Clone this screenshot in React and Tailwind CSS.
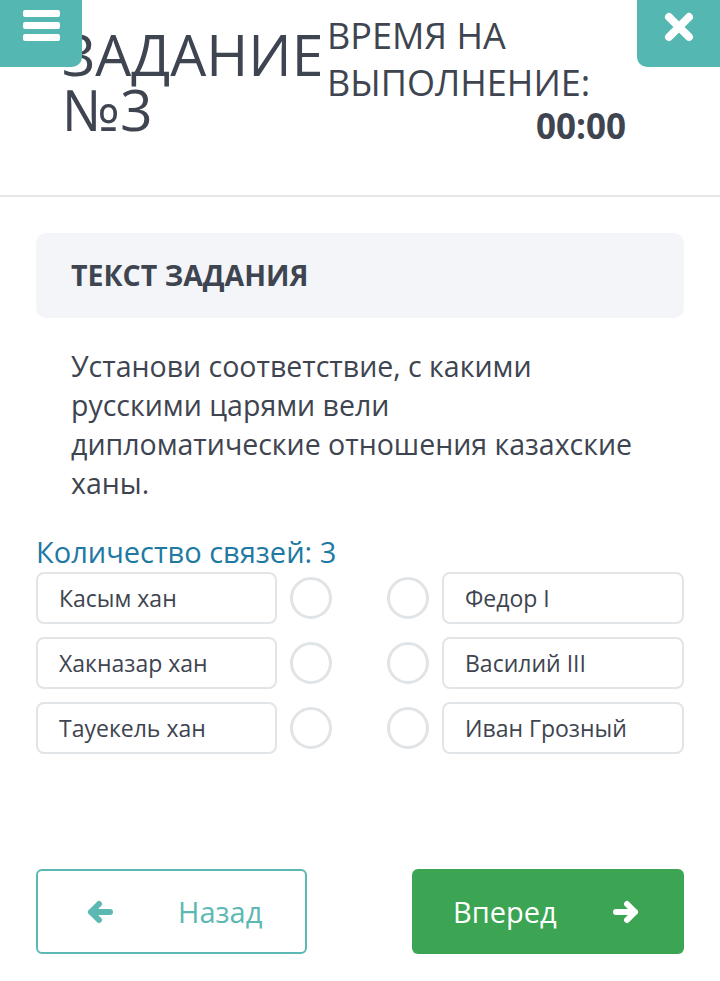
const left = ["Касым хан", "Хакназар хан", "Тауекель хан"];
const right = ["Федор I", "Василий III", "Иван Грозный"];

const Arrow = ({ dir }) => (
  <svg width="28" height="24" viewBox="0 0 28 24" className={dir === "right" ? "rotate-180" : ""}>
    <path
      d="M5 12 H24 M13 4 L5 12 L13 20"
      fill="none"
      stroke="currentColor"
      strokeWidth="6"
      strokeLinecap="round"
      strokeLinejoin="round"
    />
  </svg>
);

const App = () => {
  return (
    <div
      className="relative w-[720px] min-h-[981px] bg-white text-[#3e4450]"
      style={{ fontFamily: '"Open Sans", "Noto Sans", sans-serif' }}
    >
      {/* Menu button */}
      <button className="absolute left-0 top-0 w-[82px] h-[67px] bg-[#55b7b1] rounded-br-[10px] flex flex-col items-center pt-[10px] gap-[5px]">
        <span className="block w-[37px] h-[7px] bg-white rounded-[2px]" />
        <span className="block w-[37px] h-[7px] bg-white rounded-[2px]" />
        <span className="block w-[37px] h-[7px] bg-white rounded-[2px]" />
      </button>

      {/* Close button */}
      <button className="absolute right-0 top-0 w-[83px] h-[67px] bg-[#55b7b1] rounded-bl-[10px] flex justify-center pt-[12px]">
        <svg width="30" height="30" viewBox="0 0 30 30">
          <path d="M5 5 L25 25 M25 5 L5 25" stroke="white" strokeWidth="8" strokeLinecap="round" />
        </svg>
      </button>

      {/* Header */}
      <div className="h-[197px] border-b-2 border-[#e6e8eb] flex pl-[62px]">
        <div className="w-[265px] pt-[27px] text-[57px] leading-[55px] font-normal">
          ЗАДАНИЕ
          <br />
          №3
        </div>
        <div className="w-[299px] pt-[12px] flex flex-col">
          <div className="text-[36px] leading-[47px]">
            ВРЕМЯ НА
            <br />
            ВЫПОЛНЕНИЕ:
          </div>
          <div className="text-right text-[35px] leading-[40px] font-bold">00:00</div>
        </div>
      </div>

      <div className="px-[36px]">
        {/* Task text */}
        <div className="mt-[36px] h-[85px] bg-[#f3f5f8] rounded-[10px] flex items-center pl-[35px]">
          <h2 className="text-[28.5px] font-bold">ТЕКСТ ЗАДАНИЯ</h2>
        </div>
        <p className="mt-[29px] px-[35px] text-[28.5px] leading-[39px]">
          Установи соответствие, с какими
          <br />
          русскими царями вели
          <br />
          дипломатические отношения казахские
          <br />
          ханы.
        </p>

        <div className="mt-[33px] text-[29px] leading-[32px] text-[#2179a3]">Количество связей: 3</div>

        {/* Matching rows */}
        <div className="mt-[4px] flex flex-col gap-[13px]">
          {left.map((item, index) => (
            <div key={index} className="flex items-center h-[52px]">
              <div className="w-[241px] h-full border-2 border-[#e2e5e8] rounded-[8px] flex items-center pl-[21px] text-[23px]">
                {item}
              </div>
              <div className="ml-[13px] w-[42px] h-[42px] rounded-full border-[3px] border-[#e1e4e7]" />
              <div className="ml-[55px] w-[42px] h-[42px] rounded-full border-[3px] border-[#e1e4e7]" />
              <div className="ml-[13px] w-[242px] h-full border-2 border-[#e2e5e8] rounded-[8px] flex items-center pl-[21px] text-[23px]">
                {right[index]}
              </div>
            </div>
          ))}
        </div>

        {/* Navigation */}
        <div className="mt-[115px] flex justify-between">
          <button className="w-[271px] h-[85px] border-2 border-[#5cb8b2] rounded-[6px] flex items-center pl-[48px] text-[#5cb8b2]">
            <Arrow dir="left" />
            <span className="ml-[64px] text-[29px]">Назад</span>
          </button>
          <button className="w-[272px] h-[85px] bg-[#3ba553] rounded-[6px] flex items-center pl-[41px] text-white">
            <span className="text-[29px]">Вперед</span>
            <span className="ml-[55px]">
              <Arrow dir="right" />
            </span>
          </button>
        </div>
      </div>
    </div>
  );
};

export default App;
